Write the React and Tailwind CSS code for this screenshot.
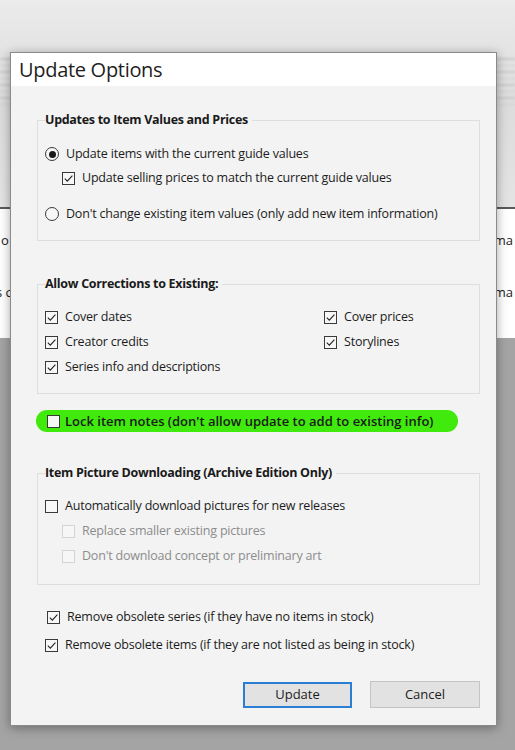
import React from 'react';

const font = { fontFamily: '"Open Sans", "Noto Sans", sans-serif' };

const Check = ({ checked, disabled }) => (
  <span
    className={`flex h-[13px] w-[13px] shrink-0 items-center justify-center border ${
      disabled ? 'border-[#d4d4d4] bg-[#f6f6f6]' : 'border-[#3a3a3a] bg-[#f7f7f7]'
    }`}
  >
    {checked && (
      <svg width="11" height="11" viewBox="0 0 11 11">
        <path d="M1.8 5.6 L4.3 8.1 L9.4 2.6" fill="none" stroke="#222" strokeWidth="1.1" />
      </svg>
    )}
  </span>
);

const Radio = ({ checked }) => (
  <span className="flex h-[14px] w-[14px] shrink-0 items-center justify-center rounded-full border border-[#3a3a3a] bg-[#f7f7f7]">
    {checked && <span className="h-[7px] w-[7px] rounded-full bg-[#1a1a1a]" />}
  </span>
);

const Row = ({ control, label, disabled, className = '' }) => (
  <div className={`flex h-[20px] items-center gap-[7px] ${className}`}>
    {control}
    <span
      className={`text-[12.5px] leading-none tracking-[-0.2px] ${disabled ? 'text-[#8c8c8c]' : 'text-[#1c1c1c]'}`}
    >
      {label}
    </span>
  </div>
);

const GroupBox = ({ title, className = '', children }) => (
  <div className={`relative border border-[#dedede] ${className}`}>
    <span className="absolute -top-[9px] left-[7px] bg-[#f3f3f3] pr-[4px] text-[12.5px] font-bold leading-[16px] tracking-[-0.3px] text-[#1a1a1a]">
      {title}
    </span>
    {children}
  </div>
);

const Background = () => (
  <div className="flex h-[750px] flex-col">
    <div className="relative h-[207px] bg-gradient-to-b from-[#ebebeb] via-[#dcdcdc] to-[#e4e4e4]">
      <div className="flex flex-col gap-[5px] pt-[58px] opacity-70">
        <div className="h-[2px] bg-[#c0c0c0] blur-[1px]" />
        <div className="h-[1px] bg-[#cbcbcb] blur-[1px]" />
        <div className="h-[2px] bg-[#c4c4c4] blur-[1px]" />
        <div className="h-[1px] bg-[#cccccc] blur-[1px]" />
        <div className="h-[2px] bg-[#c2c2c2] blur-[1px]" />
        <div className="h-[1px] bg-[#c8c8c8] blur-[1px]" />
        <div className="h-[2px] bg-[#c4c4c4] blur-[1px]" />
        <div className="h-[1px] bg-[#cccccc] blur-[1px]" />
      </div>
    </div>
    <div className="h-[2px] bg-[#5a5a5a]" />
    <div className="flex h-[129px] flex-col justify-between bg-white pt-[23px] pb-[38px] text-[13px] leading-[16px] text-[#222]">
      <div className="flex justify-between">
        <span className="pl-[1px]">o</span>
        <span className="pr-[2px]">ma</span>
      </div>
      <div className="flex justify-between">
        <span className="-ml-[4px]">s c</span>
        <span className="pr-[2px]">ma</span>
      </div>
    </div>
    <div className="flex-1 bg-[#a4a4a4]" />
  </div>
);

export default function App() {
  return (
    <div className="relative h-[750px] w-[515px] overflow-hidden" style={font}>
      <Background />

      <div className="absolute left-[10px] top-[52px] flex h-[674px] w-[487px] flex-col border border-[#8a8a8a] bg-[#f3f3f3] shadow-[0_2px_10px_rgba(0,0,0,0.35)]">
        <div className="flex h-[33px] items-center bg-white pl-[8px]">
          <span className="text-[20px] leading-none tracking-[-0.3px] text-[#1e1e1e]">Update Options</span>
        </div>

        <div className="flex flex-col pl-[26px] pr-[16px]">
          <GroupBox title="Updates to Item Values and Prices" className="mt-[34px] pl-[7px] pt-[23px] pb-[16px]">
            <Row control={<Radio checked />} label="Update items with the current guide values" />
            <Row
              className="mt-[4px] pl-[17px]"
              control={<Check checked />}
              label="Update selling prices to match the current guide values"
            />
            <Row
              className="mt-[16px]"
              control={<Radio />}
              label="Don't change existing item values (only add new item information)"
            />
          </GroupBox>

          <GroupBox title="Allow Corrections to Existing:" className="mt-[43px] pl-[7px] pt-[22px] pb-[16px]">
            <div className="grid grid-cols-[279px_1fr] gap-y-[5px]">
              <Row control={<Check checked />} label="Cover dates" />
              <Row control={<Check checked />} label="Cover prices" />
              <Row control={<Check checked />} label="Creator credits" />
              <Row control={<Check checked />} label="Storylines" />
              <Row control={<Check checked />} label="Series info and descriptions" />
            </div>
          </GroupBox>

          <div className="-ml-[1px] mt-[16px] flex h-[22px] w-[422px] items-center gap-[5px] rounded-full bg-[#3fea0c] pl-[11px]">
            <Check />
            <span className="text-[13px] font-semibold leading-none text-[#1a1a1a]">
              Lock item notes (don't allow update to add to existing info)
            </span>
          </div>

          <GroupBox title="Item Picture Downloading (Archive Edition Only)" className="mt-[41px] pl-[7px] pt-[22px] pb-[18px]">
            <Row control={<Check />} label="Automatically download pictures for new releases" />
            <Row className="mt-[5px] pl-[17px]" control={<Check disabled />} label="Replace smaller existing pictures" disabled />
            <Row className="mt-[5px] pl-[17px]" control={<Check disabled />} label="Don't download concept or preliminary art" disabled />
          </GroupBox>

          <Row className="mt-[22px] pl-[10px]" control={<Check checked />} label="Remove obsolete series (if they have no items in stock)" />
          <Row className="mt-[8px] pl-[8px]" control={<Check checked />} label="Remove obsolete items (if they are not listed as being in stock)" />

          <div className="mt-[26px] flex items-end justify-end gap-[18px]">
            <button className="h-[26px] w-[109px] border-2 border-[#2a7fd4] bg-[#e2e2e2] text-[13px] text-[#1c1c1c]">
              Update
            </button>
            <button className="h-[27px] w-[110px] border border-[#c4c4c4] bg-[#e2e2e2] text-[13px] text-[#1c1c1c]">
              Cancel
            </button>
          </div>
        </div>
      </div>
    </div>
  );
}
